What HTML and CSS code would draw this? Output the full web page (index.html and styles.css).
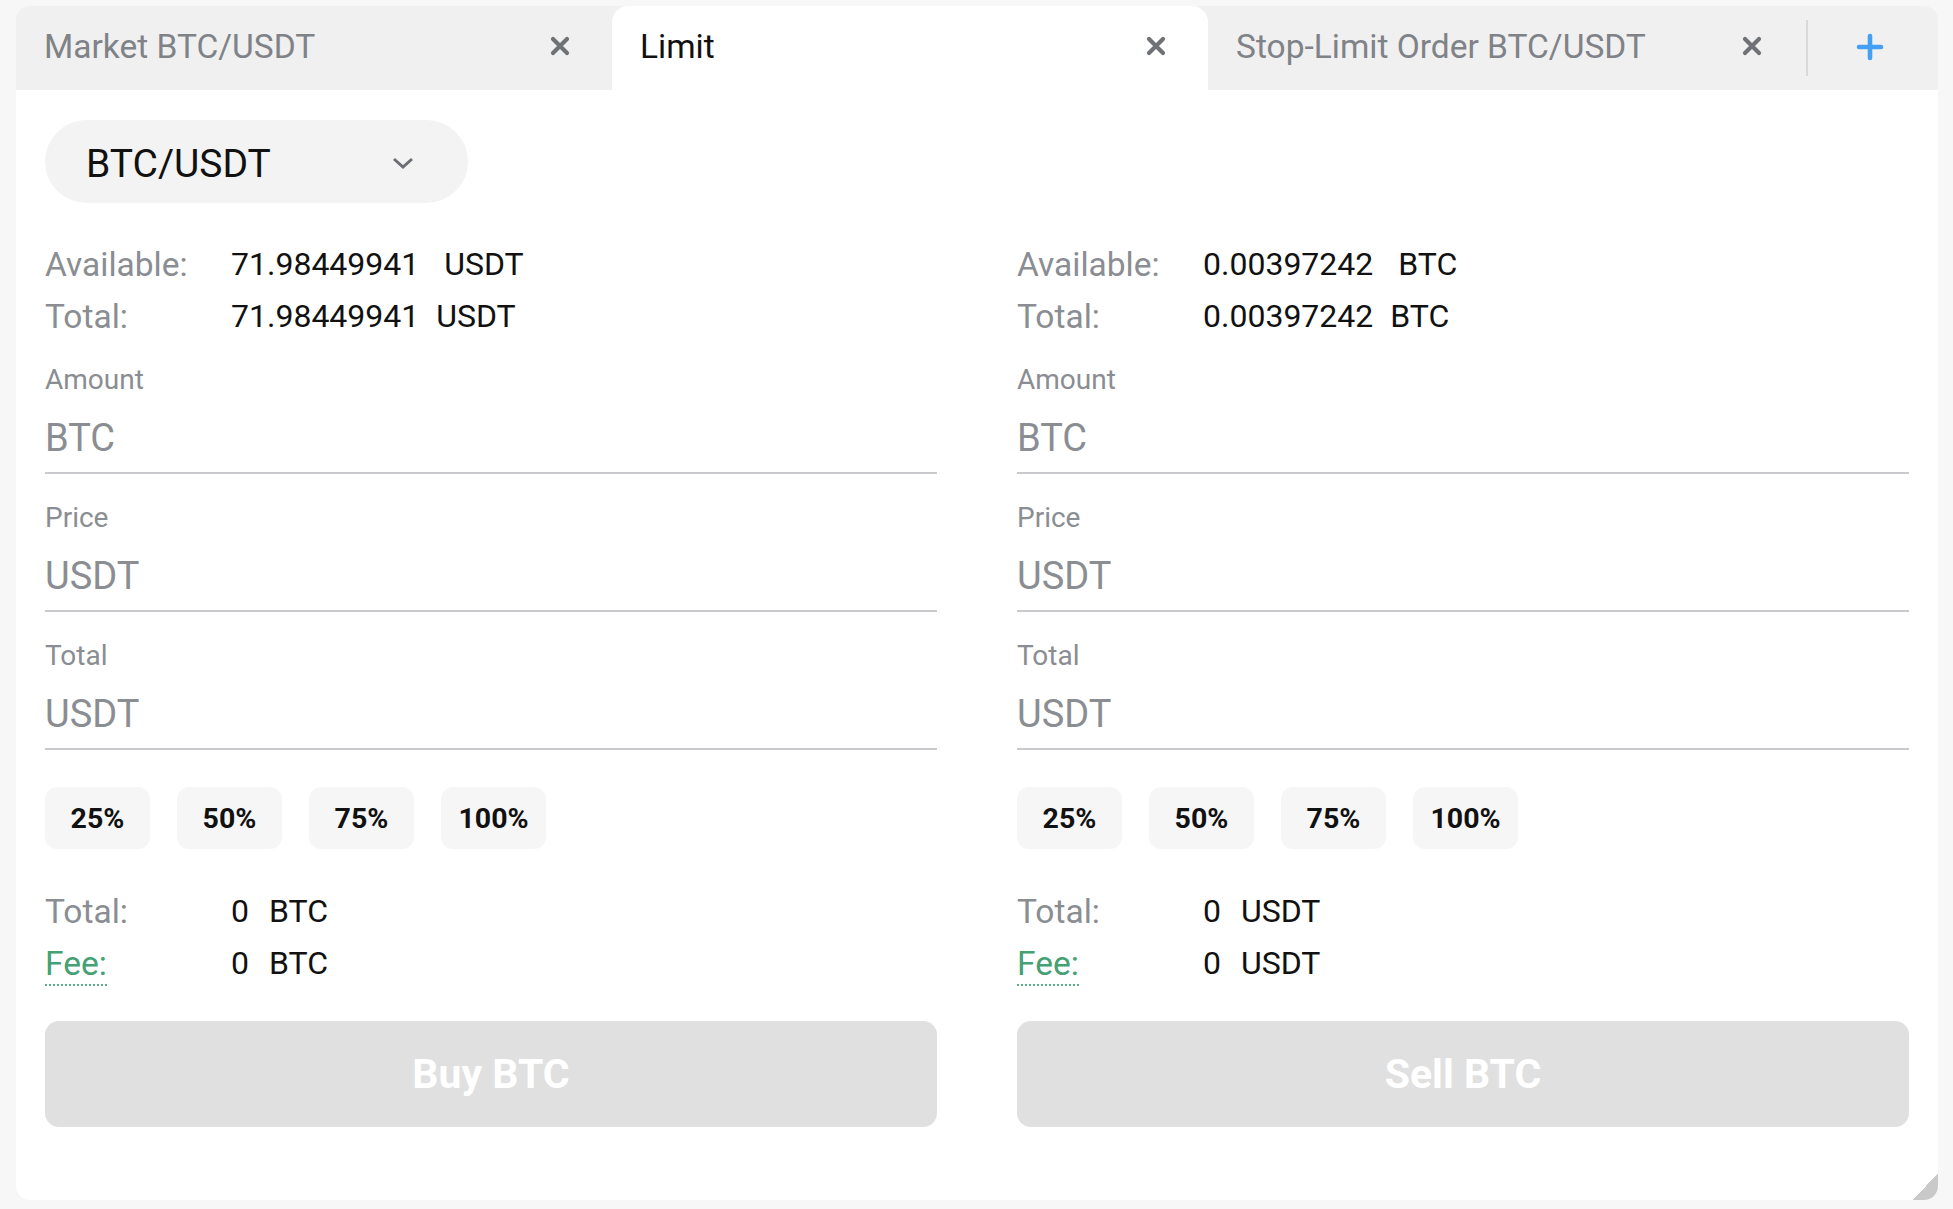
FILE: index.html
```html
<!DOCTYPE html>
<html>
<head>
<meta charset="utf-8">
<link rel="stylesheet" href="styles.css">
</head>
<body>
<div class="card">
  <div class="tabbar">
    <div class="tab"><span class="tab-title">Market BTC/USDT</span>
      <svg class="close" viewBox="0 0 20 20"><path d="M3 3L17 17M17 3L3 17"/></svg></div>
    <div class="tab active"><span class="tab-title">Limit</span>
      <svg class="close" viewBox="0 0 20 20"><path d="M3 3L17 17M17 3L3 17"/></svg></div>
    <div class="tab"><span class="tab-title">Stop-Limit Order BTC/USDT</span>
      <svg class="close" viewBox="0 0 20 20"><path d="M3 3L17 17M17 3L3 17"/></svg></div>
    <div class="sep"></div>
    <div class="add"><svg class="plus" viewBox="0 0 28 28"><path d="M14 3V25M3 14H25"/></svg></div>
  </div>

  <div class="body">
    <div class="pair">
      <span class="pair-name">BTC/USDT</span>
      <svg class="chev" viewBox="0 0 22 12"><polyline points="2,2 11,10 20,2"/></svg>
    </div>

    <div class="cols">
      <div class="col">
        <div class="info">
          <div class="row"><span class="lbl">Available:</span><span class="val">71.98449941</span><span class="cur wide">USDT</span></div>
          <div class="row"><span class="lbl">Total:</span><span class="val">71.98449941</span><span class="cur">USDT</span></div>
        </div>
        <div class="field"><div class="flabel">Amount</div><div class="input">BTC</div></div>
        <div class="field"><div class="flabel">Price</div><div class="input">USDT</div></div>
        <div class="field"><div class="flabel">Total</div><div class="input">USDT</div></div>
        <div class="pcts"><span class="pct">25%</span><span class="pct">50%</span><span class="pct">75%</span><span class="pct">100%</span></div>
        <div class="summary">
          <div class="row"><span class="lbl">Total:</span><span class="val">0</span><span class="cur">BTC</span></div>
          <div class="row"><span class="lbl"><span class="fee">Fee:</span></span><span class="val">0</span><span class="cur">BTC</span></div>
        </div>
        <div class="action">Buy BTC</div>
      </div>

      <div class="col">
        <div class="info">
          <div class="row"><span class="lbl">Available:</span><span class="val">0.00397242</span><span class="cur wide">BTC</span></div>
          <div class="row"><span class="lbl">Total:</span><span class="val">0.00397242</span><span class="cur">BTC</span></div>
        </div>
        <div class="field"><div class="flabel">Amount</div><div class="input">BTC</div></div>
        <div class="field"><div class="flabel">Price</div><div class="input">USDT</div></div>
        <div class="field"><div class="flabel">Total</div><div class="input">USDT</div></div>
        <div class="pcts"><span class="pct">25%</span><span class="pct">50%</span><span class="pct">75%</span><span class="pct">100%</span></div>
        <div class="summary">
          <div class="row"><span class="lbl">Total:</span><span class="val">0</span><span class="cur">USDT</span></div>
          <div class="row"><span class="lbl"><span class="fee">Fee:</span></span><span class="val">0</span><span class="cur">USDT</span></div>
        </div>
        <div class="action">Sell BTC</div>
      </div>
    </div>
  </div>
  <div class="resize"></div>
</div>
</body>
</html>
```

FILE: styles.css
```css
* { box-sizing: border-box; }
html, body { margin: 0; padding: 0; }
body {
  background: #f7f7f7;
  font-family: Roboto, "Liberation Sans", sans-serif;
  padding: 6px 15px 9px 16px;
}
.card {
  position: relative;
  width: 1922px;
  height: 1194px;
  background: #fff;
  border-radius: 14px;
  overflow: hidden;
}
.tabbar {
  display: flex;
  height: 84px;
  background: #f0f0f0;
}
.tab {
  flex: 0 0 596px;
  display: flex;
  align-items: center;
  justify-content: space-between;
  padding: 0 42px 0 28px;
  color: #7f8287;
  font-size: 33.5px;
  padding-bottom: 4px;
}
.tab.active {
  background: #fff;
  color: #111;
  border-radius: 16px 16px 0 0;
}
.close {
  width: 20px;
  height: 20px;
  fill: none;
  stroke: #6e7176;
  stroke-width: 4.2;
  stroke-linecap: round;
}
.sep {
  width: 2px;
  height: 56px;
  align-self: center;
  background: #d9d9d9;
  margin-left: 2px;
}
.add {
  flex: 1;
  display: flex;
  align-items: center;
  justify-content: center;
  padding-right: 6px;
  padding-bottom: 2px;
}
.plus {
  width: 28px;
  height: 28px;
  fill: none;
  stroke: #45a0f4;
  stroke-width: 4.6;
  stroke-linecap: round;
}
.body {
  padding: 30px 29px 0 29px;
}
.pair {
  width: 423px;
  height: 83px;
  border-radius: 42px;
  background: #f3f3f3;
  display: flex;
  align-items: center;
  justify-content: space-between;
  padding: 0 54px 0 41px;
}
.pair-name {
  font-size: 39px;
  color: #111;
  margin-top: 4px;
}
.chev {
  width: 22px;
  height: 12px;
  fill: none;
  stroke: #6b6e73;
  stroke-width: 3;
  margin-top: 2px;
}
.cols {
  display: grid;
  grid-template-columns: 892px 892px;
  column-gap: 80px;
}
.info { margin-top: 35px; }
.row {
  display: flex;
  height: 52px;
  align-items: center;
  font-size: 32px;
}
.lbl {
  width: 186px;
  color: #8a8d92;
  font-size: 33.5px;
}
.val { color: #111; }
.cur { color: #111; margin-left: 17px; }
.cur.wide { margin-left: 25px; }
.field { margin-top: 26px; }
.info + .field { margin-top: 20px; }
.flabel {
  height: 36px;
  line-height: 36px;
  font-size: 28px;
  color: #8a8d92;
  margin-bottom: 2px;
}
.input {
  height: 74px;
  display: flex;
  align-items: center;
  font-size: 38px;
  color: #8a8d92;
  border-bottom: 2px solid #c8cacd;
  padding-top: 3px;
}
.pcts {
  display: flex;
  gap: 27px;
  margin-top: 37px;
}
.pct {
  width: 105px;
  height: 62px;
  border-radius: 12px;
  background: #f6f6f6;
  display: flex;
  align-items: center;
  justify-content: center;
  font-size: 28.5px;
  font-weight: 700;
  color: #111;
}
.summary { margin-top: 36px; }
.summary .cur { margin-left: 20px; }
.fee {
  color: #44a174;
  border-bottom: 2px dotted #5aae83;
  padding-bottom: 1px;
}
.action {
  margin-top: 32px;
  height: 106px;
  border-radius: 14px;
  background: #e0e0e0;
  color: #fff;
  font-size: 41px;
  font-weight: 700;
  display: flex;
  align-items: center;
  justify-content: center;
}
.resize {
  position: absolute;
  right: 0;
  bottom: 0;
  width: 25px;
  height: 27px;
  background: linear-gradient(to top left, #c9c9c9 50%, transparent 50%);
}
```
